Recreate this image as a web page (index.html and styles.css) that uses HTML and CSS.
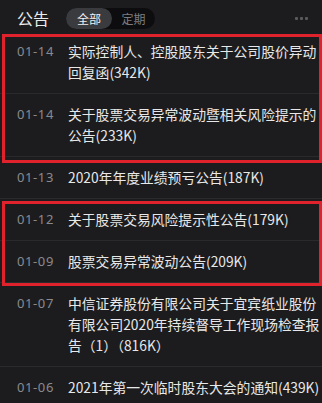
FILE: index.html
```html
<!DOCTYPE html>
<html lang="zh-CN">
<head>
<meta charset="utf-8">
<title>公告</title>
<link rel="stylesheet" href="styles.css">
</head>
<body>
<div class="page">
  <header class="head">
    <h1 class="title">公告</h1>
    <div class="seg">
      <span class="seg-item active">全部</span>
      <span class="seg-item">定期</span>
    </div>
    <div class="more"><i></i><i></i><i></i></div>
  </header>
  <div class="list">
    <div class="row"><span class="date">01-14</span><span class="text">实际控制人、控股股东关于公司股价异动回复函(342K)</span></div>
    <div class="row"><span class="date">01-14</span><span class="text">关于股票交易异常波动暨相关风险提示的公告(233K)</span></div>
    <div class="row"><span class="date">01-13</span><span class="text">2020年年度业绩预亏公告(187K)</span></div>
    <div class="row"><span class="date">01-12</span><span class="text">关于股票交易风险提示性公告(179K)</span></div>
    <div class="row"><span class="date">01-09</span><span class="text">股票交易异常波动公告(209K)</span></div>
    <div class="row"><span class="date">01-07</span><span class="text">中信证券股份有限公司关于宜宾纸业股份有限公司2020年持续督导工作现场检查报告（1）（816K）</span></div>
    <div class="row"><span class="date">01-06</span><span class="text">2021年第一次临时股东大会的通知(439K)</span></div>
    <div class="mark mark-a"></div>
    <div class="mark mark-b"></div>
  </div>
</div>
</body>
</html>
```
FILE: styles.css
```css
html, body {
  margin: 0;
  padding: 0;
  background: #1c1c1e;
}
body {
  font-family: "Noto Sans CJK SC", "Noto Sans", sans-serif;
  color: #e6e6e6;
  overflow: hidden;
}
.page {
  width: 322px;
  height: 403px;
  overflow: hidden;
}
.head {
  height: 31px;
  display: flex;
  align-items: center;
  padding: 0 14px 0 17px;
  box-sizing: border-box;
}
.title {
  margin: 0;
  font-size: 16px;
  font-weight: 400;
  line-height: 20px;
  color: #ececec;
  padding-top: 4px;
}
.seg {
  margin-left: 17px;
  display: flex;
  height: 21px;
  width: 89px;
  border-radius: 11px;
  background: #0d0d0f;
  margin-top: 6px;
}
.seg-item {
  flex: 1;
  display: flex;
  align-items: center;
  justify-content: center;
  font-size: 12px;
  color: #7d7d80;
  border-radius: 11px;
}
.seg-item.active {
  flex: 0 0 46px;
  background: #3a3b3e;
  color: #f0f0f0;
}
.more {
  margin-left: auto;
  display: flex;
  gap: 2px;
  margin-top: 5px;
}
.more i {
  width: 3px;
  height: 3px;
  background: #5a5a5e;
  border-radius: 1px;
}
.list {
  position: relative;
}
.row {
  display: flex;
  padding: 10px 0 10px 17px;
  border-bottom: 1px solid #2a2a2d;
  line-height: 21px;
}
.row:last-of-type {
  border-bottom: none;
}
.date {
  flex: 0 0 51px;
  font-size: 13px;
  letter-spacing: 0.6px;
  color: #8a8a8e;
  font-family: "Noto Sans", "Noto Sans CJK SC", sans-serif;
}
.text {
  flex: 1;
  min-width: 0;
  font-size: 13.8px;
  color: #e8e8e8;
  overflow-wrap: anywhere;
}
.mark {
  position: absolute;
  left: 2px;
  width: 320px;
  border: 3px solid #e0222c;
  box-sizing: border-box;
  pointer-events: none;
}
.mark-a {
  top: 3px;
  height: 129px;
}
.mark-b {
  top: 170px;
  height: 85px;
}
```
